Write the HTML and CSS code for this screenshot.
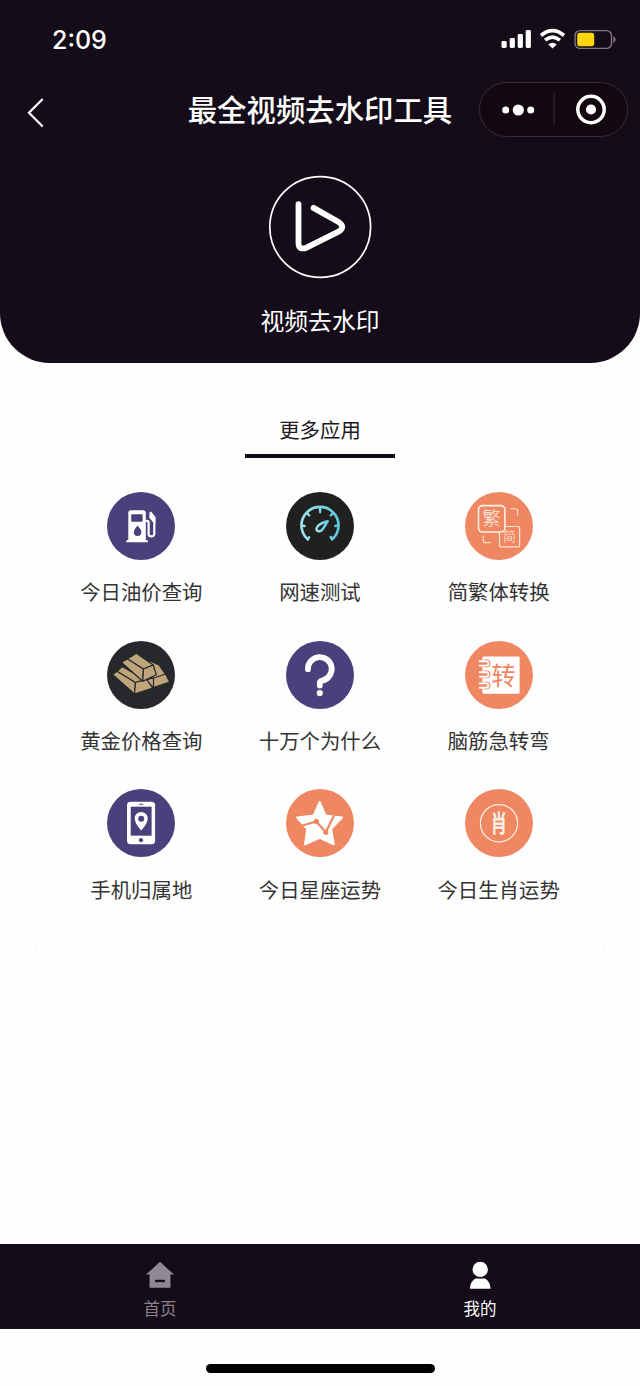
FILE: index.html
```html
<!DOCTYPE html>
<html lang="zh-CN">
<head>
  <meta charset="UTF-8">
  <meta name="viewport" content="width=device-width, initial-scale=1.0">
  <title>最全视频去水印工具</title>
  <link rel="stylesheet" href="styles.css">
</head>
<body>
  <header class="header">
    <div class="status">
      <span class="hora">2:09</span>
      <svg class="status-icons" width="116" height="22" viewBox="0 0 116 22">
        <g fill="#fff">
          <rect x="1.5" y="13" width="5.2" height="7" rx="1.4"/>
          <rect x="9.7" y="10" width="5.2" height="10" rx="1.4"/>
          <rect x="17.7" y="6" width="5.2" height="14" rx="1.4"/>
          <rect x="25.7" y="2" width="5.2" height="18" rx="1.4"/>
          <path d="M52.5 20.5L48.3 16.4Q52.5 13.1 56.7 16.4Z"/>
        </g>
        <path d="M41 7.5Q52.5-2.2 64 7.5M45.1 12.2Q52.5 6 59.9 12.2" fill="none" stroke="#fff" stroke-width="3.6"/>
        <rect x="75.1" y="2.6" width="36.4" height="17.8" rx="5" fill="none" stroke="#85757f" stroke-width="1.4"/>
        <rect x="77.2" y="4.8" width="17" height="13.4" rx="2.6" fill="#fdd50d"/>
        <path d="M113.3 8.2Q115.6 9 115.6 11.5T113.3 14.8Z" fill="#85757f"/>
      </svg>
    </div>

    <div class="navbar">
      <svg class="volver" width="20" height="32" viewBox="0 0 20 32">
        <path d="M16.7 3L3 16.8L16.7 30.5" fill="none" stroke="#fff" stroke-width="2.2"/>
      </svg>
      <h1 class="titulo">最全视频去水印工具</h1>
      <div class="capsula">
        <svg width="147" height="53" viewBox="0 0 147 53">
          <g fill="#fff">
            <circle cx="25.7" cy="27" r="3.5"/>
            <circle cx="38.3" cy="27" r="5.6"/>
            <circle cx="50.7" cy="27" r="3.5"/>
            <circle cx="111" cy="26.5" r="5.1"/>
          </g>
          <path d="M74 10V42" stroke="#3a2c35" stroke-width="1"/>
          <circle cx="111" cy="26.5" r="13.2" fill="none" stroke="#fff" stroke-width="3.5"/>
        </svg>
      </div>
    </div>

    <div class="principal">
      <svg width="104" height="104" viewBox="0 0 104 104">
        <circle cx="52.2" cy="52" r="50.4" fill="none" stroke="#fff" stroke-width="1.7"/>
        <path d="M30.5 29.2V68Q30.5 75.5 38.5 72.7L71 56.3Q77.5 52 71 47.3L45.5 32.9" fill="none" stroke="#fff" stroke-width="5.8" stroke-linecap="round" stroke-linejoin="round"/>
      </svg>
      <p class="principal-texto">视频去水印</p>
    </div>
  </header>

  <main class="card">
    <h2 class="card-titulo">更多应用</h2>

    <div class="apps">
      <div class="app">
        <svg class="icono morado" viewBox="0 0 68 68">
          <path d="M21.3 48V21Q21.3 18.2 24.1 18.2H36Q38.8 18.2 38.8 21V48H40Q40.9 48.2 40.9 50.2H19.2Q19.2 48.2 20.3 48Z" fill="#fff"/>
          <rect x="24.2" y="22.2" width="11.4" height="7.6" rx="1" fill="#4b407b"/>
          <path d="M30.6 33.6Q34.4 38 34.4 40.2A3.8 3.8 0 0 1 26.8 40.2Q26.8 38 30.6 33.6Z" fill="#4b407b"/>
          <path d="M38.5 28.8H40Q41.6 28.8 41.6 30.4V42Q41.6 44.4 44.4 44.4T47.3 42V25.5L43.2 20.2" fill="none" stroke="#fff" stroke-width="2.2"/>
          <path d="M42.6 20.4L48.3 25V31.5L45.6 29.7L42.2 25.5Z" fill="#fff"/>
        </svg>
        <span>今日油价查询</span>
      </div>

      <div class="app">
        <svg class="icono negro" viewBox="0 0 68 68">
          <defs>
            <linearGradient id="celeste" x1="0" y1="0" x2="1" y2="0">
              <stop offset="0" stop-color="#9ae3e8"/>
              <stop offset="1" stop-color="#5fc8de"/>
            </linearGradient>
          </defs>
          <g fill="none" stroke="url(#celeste)" stroke-linecap="round" stroke-linejoin="round">
            <path d="M21.8 47.3A18.5 18.5 0 1 1 46.2 47.3L44.9 45.2" stroke-width="2.7"/>
            <path d="M21.8 47.3L23.1 45.2M34.1 16V20.3L34 16M21.3 21.5L23.2 23.4M46.7 21.5L44.8 23.4M16 33.7L18.6 34M52 33.7L49.4 34" stroke-width="2.3"/>
            <path d="M41.8 29.2Q33.8 31 31.3 34.9Q29.3 38.1 32 39.1Q35.2 40.1 37.5 36Z" stroke-width="2.5"/>
          </g>
        </svg>
        <span>网速测试</span>
      </div>

      <div class="app">
        <svg class="icono naranja" viewBox="0 0 68 68">
          <g fill="none" stroke="#ffe6d5">
            <rect x="34.5" y="34.5" width="20.1" height="20.3" rx="1" stroke-width="1.2"/>
            <path d="M45.5 16.8H50.5Q52.6 16.8 52.6 19V23.8M18.2 43.8V48Q18.2 50.8 21 50.8H26" stroke-width="1.1"/>
          </g>
          <rect x="13.5" y="13.6" width="26.4" height="26.4" rx="4" fill="#ee8762" stroke="#fff1e5" stroke-width="1.6"/>
          <text class="letra" x="26.6" y="33.4" font-size="18.5" font-weight="300">繁</text>
          <text class="letra" x="44.6" y="49.4" font-size="13" font-weight="300">简</text>
        </svg>
        <span>简繁体转换</span>
      </div>

      <div class="app">
        <svg class="icono gris" viewBox="0 0 68 68">
          <g fill="#bfa57b" stroke="#27282c" stroke-width="1.2" stroke-linejoin="round">
            <path d="M43 20L52 24L59 34L46 38L38 22Z"/>
            <path d="M45.5 37.5L58.5 33L62.7 41L45.7 46.8Z"/>
            <path d="M38.5 39L46.5 37V46.5Z"/>
            <path d="M5.5 33.5L10.2 30.3L28.5 41.5L27.5 53Z"/>
            <path d="M10.2 30.3L15 25.5L38 38.6L28.5 41.5Z"/>
            <path d="M28.5 41.5L39.5 38.3L45.7 47L27.5 53Z"/>
            <path d="M14.5 21.5L20.5 17.7L36.5 28L35.7 40.3Z"/>
            <path d="M20.5 17.7L29.5 12.2L46.2 24L36.5 28Z"/>
            <path d="M36.5 28L46.2 24L49.3 33.7L35.7 40.3Z"/>
          </g>
        </svg>
        <span>黄金价格查询</span>
      </div>

      <div class="app">
        <svg class="icono morado" viewBox="0 0 68 68">
          <path d="M21.9 28.2A11.9 11.9 0 1 1 36.2 39.6Q33.8 40.2 33.8 42.3V44.6" fill="none" stroke="#fff" stroke-width="5.8" stroke-linecap="round"/>
          <circle cx="33.8" cy="52.1" r="3.1" fill="#fff"/>
        </svg>
        <span>十万个为什么</span>
      </div>

      <div class="app">
        <svg class="icono naranja" viewBox="0 0 68 68">
          <rect x="17.4" y="15.6" width="37.2" height="37.2" rx="1.3" fill="#fff"/>
          <g fill="#ee8762">
            <rect x="16.5" y="18.6" width="9" height="7.6" rx="3.8"/>
            <rect x="16.5" y="29.6" width="9" height="7.6" rx="3.8"/>
            <rect x="16.5" y="40.8" width="9" height="7.6" rx="3.8"/>
          </g>
          <g fill="none" stroke="#fff" stroke-width="1.9" stroke-linecap="round">
            <path d="M14.6 20.2H21.2A2.2 2.2 0 0 1 21.2 24.6H14.6"/>
            <path d="M14.6 31.2H21.2A2.2 2.2 0 0 1 21.2 35.6H14.6"/>
            <path d="M14.6 42.4H21.2A2.2 2.2 0 0 1 21.2 46.8H14.6"/>
          </g>
          <text class="letra letra-naranja" x="38.6" y="43.5" font-size="24.5">转</text>
        </svg>
        <span>脑筋急转弯</span>
      </div>

      <div class="app">
        <svg class="icono morado" viewBox="0 0 68 68">
          <rect x="20" y="12.7" width="28.1" height="42.6" rx="3.6" fill="#fff"/>
          <rect x="23.7" y="17.7" width="20.9" height="29" fill="#4b407b"/>
          <rect x="32" y="14.8" width="4.4" height="1" rx=".5" fill="#4b407b"/>
          <circle cx="34" cy="51.2" r="2.1" fill="#4b407b"/>
          <path d="M34.2 41.5Q27.7 34 27.7 29.4A6.5 6.5 0 0 1 40.7 29.4Q40.7 34 34.2 41.5Z" fill="#fff"/>
          <circle cx="34.2" cy="29.8" r="3" fill="#4b407b"/>
        </svg>
        <span>手机归属地</span>
      </div>

      <div class="app">
        <svg class="icono naranja" viewBox="0 0 68 68">
          <path d="M33.7 13L39.4 26.4L56.2 28.4L45.2 39.8L47.8 55.3L33.7 48.8L19 55.3L21.3 40L11 28.4L27.8 26.4Z" fill="#fff" stroke="#fff" stroke-width="2" stroke-linejoin="round"/>
          <path d="M14 37.3L30.3 32.5L39.8 43.3L49 24.5" fill="none" stroke="#ee8762" stroke-width="2.2"/>
          <circle cx="30.3" cy="32.3" r="2.6" fill="#ee8762"/>
          <circle cx="39.8" cy="43.3" r="2.6" fill="#ee8762"/>
        </svg>
        <span>今日星座运势</span>
      </div>

      <div class="app">
        <svg class="icono naranja" viewBox="0 0 68 68">
          <circle cx="34" cy="34.2" r="18.6" fill="none" stroke="#fff1e5" stroke-width="1.2"/>
          <text class="letra" transform="translate(33.9 42.6) scale(.68 1)" font-size="24" font-weight="700">肖</text>
        </svg>
        <span>今日生肖运势</span>
      </div>
    </div>
  </main>

  <nav class="tabs">
    <div class="tab">
      <svg width="30" height="30" viewBox="0 0 30 30">
        <path d="M15 1.8L29 14.6H25.4V27.8H4.6V14.6H1Z" fill="#8f8994"/>
        <path d="M10 21H20" stroke="#140c19" stroke-width="2.4"/>
      </svg>
      <span>首页</span>
    </div>
    <div class="tab activo">
      <svg width="30" height="30" viewBox="0 0 30 30">
        <path d="M4.8 28.7Q5.2 21.5 10.5 18.4H19.9Q25.2 21.5 25.6 28.7Z" fill="#fff"/>
        <circle cx="15.2" cy="9.4" r="8.3" fill="#fff" stroke="#140c19" stroke-width="1.2"/>
      </svg>
      <span>我的</span>
    </div>
  </nav>

  <footer class="inicio">
    <div class="barra"></div>
  </footer>
</body>
</html>
```
FILE: styles.css
```css
* {
  box-sizing: border-box;
}

body {
  font-family: "Noto Sans CJK SC", sans-serif;
  background-color: #fefefe;
  margin: 0;
  height: 1386px;
  color: #333;
  display: flex;
  flex-direction: column;
}

svg {
  display: block;
  flex-shrink: 0;
}

/* Cabecera */
.header {
  height: 363px;
  background-color: #140c19;
  border-radius: 0 0 50px 50px;
  color: white;
}

.status {
  height: 82px;
  padding: 28px 24px 0 52px;
  display: flex;
  justify-content: space-between;
}

.hora {
  font-family: Inter, sans-serif;
  font-size: 25px;
  font-weight: 500;
  line-height: 24px;
}

.navbar {
  height: 55px;
  padding: 0 12px 0 26px;
  display: grid;
  grid-template-columns: 1fr auto 1fr;
  align-items: center;
}

.volver {
  margin-top: 4px;
}

.titulo {
  margin: 0;
  font-size: 29.4px;
  font-weight: 500;
  line-height: 53px;
  white-space: nowrap;
  padding: 0 14px 2px 0;
}

.capsula {
  width: 149px;
  height: 55px;
  border: 1px solid #3a2c35;
  border-radius: 28px;
  background-color: #14070f;
  justify-self: end;
}

.principal {
  padding-top: 38px;
  display: flex;
  flex-direction: column;
  align-items: center;
}

.principal-texto {
  margin: 23px 0 0;
  font-size: 23.8px;
  line-height: 36px;
}

/* Aplicaciones */
.card {
  width: 572px;
  height: 559px;
  margin: 34px auto 0;
  padding: 16px 17px 0;
  border: 1px solid #f8f8f8;
  border-radius: 12px;
  background-color: #fefefe;
}

.card-titulo {
  width: 150px;
  height: 44px;
  margin: 0 auto 34px;
  border-bottom: 4px solid #140c19;
  font-size: 20.4px;
  font-weight: 400;
  line-height: 30px;
  text-align: center;
  color: #1c1720;
}

.apps {
  display: grid;
  grid-template-columns: repeat(3, 1fr);
  grid-auto-rows: 148.6px;
}

.app {
  display: flex;
  flex-direction: column;
  align-items: center;
  gap: 16.4px;
  font-size: 20.4px;
  line-height: 30px;
  white-space: nowrap;
}

.icono {
  width: 68px;
  height: 68px;
  border-radius: 50%;
}

.morado {
  background-color: #4b407b;
}

.negro {
  background-color: #202020;
}

.gris {
  background-color: #27282c;
}

.naranja {
  background-color: #ee8762;
}

.letra {
  fill: #fff1e5;
  text-anchor: middle;
}

.letra-naranja {
  fill: #ee8762;
}

/* Barra inferior */
.tabs {
  height: 85px;
  margin-top: auto;
  background-color: #140c19;
  display: grid;
  grid-template-columns: 1fr 1fr;
}

.tab {
  padding-top: 16px;
  display: flex;
  flex-direction: column;
  align-items: center;
  gap: 6px;
  font-size: 16.5px;
  line-height: 24px;
  color: #8b808b;
}

.activo {
  color: white;
}

.inicio {
  height: 57px;
  padding-top: 34.5px;
}

.barra {
  width: 229px;
  height: 9px;
  margin: 0 auto;
  border-radius: 5px;
  background-color: black;
}
```
